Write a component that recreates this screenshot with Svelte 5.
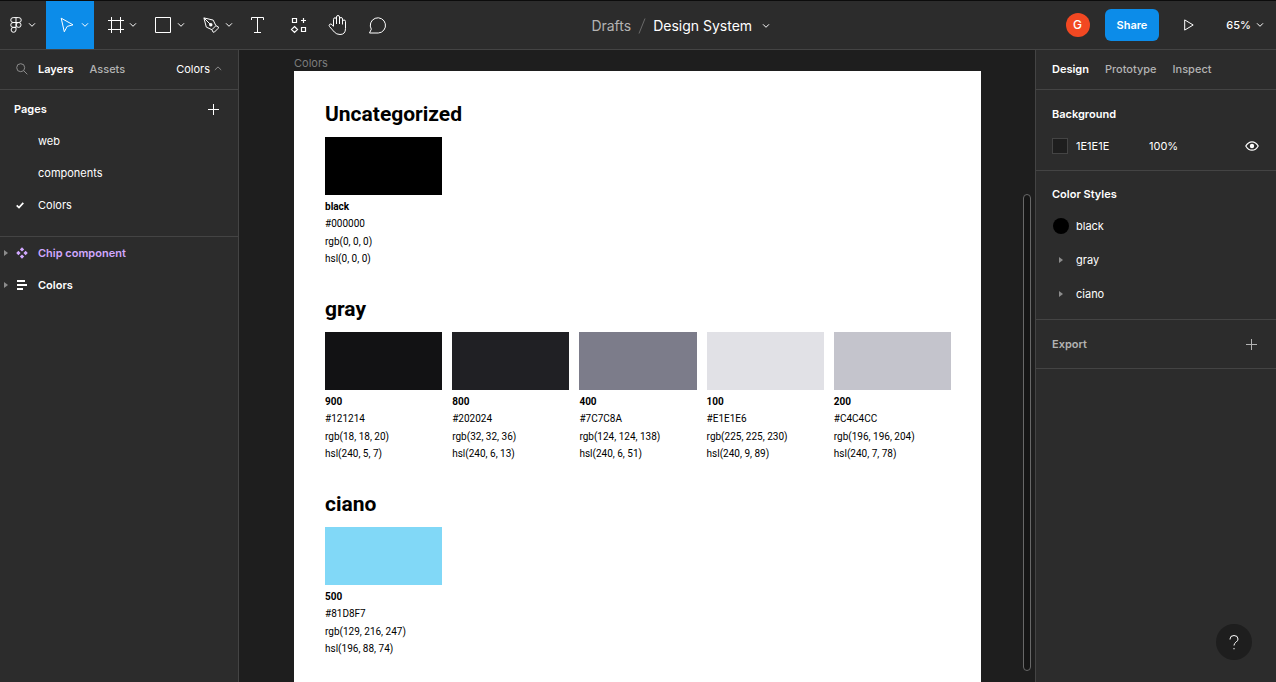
<script>
  const pages = ['web', 'components', 'Colors'];
  let currentPage = $state('Colors');

  const groups = [
    { title: 'Uncategorized', colors: [{ name: 'black', hex: '#000000', rgb: '0, 0, 0', hsl: '0, 0, 0' }] },
    {
      title: 'gray',
      colors: [
        { name: '900', hex: '#121214', rgb: '18, 18, 20', hsl: '240, 5, 7' },
        { name: '800', hex: '#202024', rgb: '32, 32, 36', hsl: '240, 6, 13' },
        { name: '400', hex: '#7C7C8A', rgb: '124, 124, 138', hsl: '240, 6, 51' },
        { name: '100', hex: '#E1E1E6', rgb: '225, 225, 230', hsl: '240, 9, 89' },
        { name: '200', hex: '#C4C4CC', rgb: '196, 196, 204', hsl: '240, 7, 78' }
      ]
    },
    { title: 'ciano', colors: [{ name: '500', hex: '#81D8F7', rgb: '129, 216, 247', hsl: '196, 88, 74' }] }
  ];
</script>

{#snippet chevron()}
  <svg width="8" height="6" viewBox="0 0 8 6"><path d="M1 1.3 4 4.3 7 1.3" /></svg>
{/snippet}

{#snippet caret()}
  <svg class="caret" width="4" height="6" viewBox="0 0 4 6"><path d="M0 0 4 3 0 6Z" /></svg>
{/snippet}

{#snippet plus()}
  <svg width="11" height="11" viewBox="0 0 11 11"><path d="M5.5 0V11M0 5.5H11" /></svg>
{/snippet}

<div class="app">
  <header>
    <nav class="tools" aria-label="Tools">
      <button class="tool menu" aria-label="Main menu">
        <svg width="12" height="16" viewBox="0 0 12 16">
          <path d="M6 .6H3.2a2.45 2.45 0 0 0 0 4.9H6ZM6 .6h2.8a2.45 2.45 0 0 1 0 4.9H6M6 5.5H3.2a2.45 2.45 0 0 0 0 4.9H6ZM6 10.4H3.2A2.45 2.45 0 1 0 6 12.9Z" />
          <circle cx="8.6" cy="7.95" r="2.45" />
        </svg>
        {@render chevron()}
      </button>
      <button class="tool active" aria-label="Move">
        <svg width="16" height="16" viewBox="0 0 16 16"><path d="M2.2 1.2 14 7.8 8.2 9.4 5.3 14.8Z" /></svg>
        {@render chevron()}
      </button>
      <button class="tool" aria-label="Frame">
        <svg width="16" height="16" viewBox="0 0 16 16"><path d="M4.5 0V16M13.5 0V16M1 3.5H17M1 12.5H17" /></svg>
        {@render chevron()}
      </button>
      <button class="tool" aria-label="Shape">
        <svg width="16" height="16" viewBox="0 0 16 16"><path d="M.5.5H15.5V15.5H.5Z" /></svg>
        {@render chevron()}
      </button>
      <button class="tool" aria-label="Pen">
        <svg width="16" height="16" viewBox="0 0 16 16">
          <path d="M.9.9 3.3 10.1 8.9 12.7 12.9 8.7 10.2 3.1ZM.9.9 6.9 6.9M8.9 12.7l1.2 2.5 1.3-.1 3.9-3.9.1-1.3-2.5-1.2" />
          <circle class="pupil" cx="7.8" cy="7.8" r="1.7" />
        </svg>
        {@render chevron()}
      </button>
      <button class="tool single" aria-label="Text">
        <svg width="14" height="16" viewBox="0 0 14 16"><path d="M.5 3V.5H12.5V3M6.5 .5V15.5M3 15.5H10" /></svg>
      </button>
      <button class="tool single" aria-label="Resources">
        <svg width="16" height="16" viewBox="0 0 16 16">
          <path stroke-width="1.2" d="M2.5 1.5h4v4h-4ZM11.5 10.5h4v4h-4ZM13.5 1v5M11 3.5h5M4.500 9.5 7.5 12.5 4.5 15.5 1.5 12.5Z" />
        </svg>
      </button>
      <button class="tool single" aria-label="Hand">
        <svg width="20" height="20" viewBox="0 0 20 20">
          <path d="M5.5 11V4.3a1.5 1.5 0 0 1 3 0V9M8.5 5V2a1.5 1.5 0 0 1 3 0V9M11.5 4a1.5 1.5 0 0 1 3 0V9.5M14.5 6.5a1.5 1.5 0 0 1 3 0V13.5Q17.5 19.5 12 19.5 8.5 19.5 6.3 17L1.5 11.5Q.6 10.2 1.7 9.3 2.9 8.6 4 9.6L5.5 11.5" />
        </svg>
      </button>
      <button class="tool single" aria-label="Comment">
        <svg width="20" height="17" viewBox="0 0 20 17"><path d="M1.5 16 3.3 12.2A7.6 7.6 0 1 1 10.3 16Z" /></svg>
      </button>
    </nav>

    <div class="file">
      <a href="#drafts">Drafts</a>
      <svg class="slash" width="8" height="16" viewBox="0 0 8 16"><path d="M7 .5 1 15.5" /></svg>
      <button>Design System {@render chevron()}</button>
    </div>

    <div class="actions">
      <span class="avatar">G</span>
      <button class="share">Share</button>
      <button class="play" aria-label="Present">
        <svg width="10" height="12" viewBox="0 0 10 12"><path d="M.7.9 9.2 6 .7 11.1Z" /></svg>
      </button>
      <button class="zoom">65% {@render chevron()}</button>
    </div>
  </header>

  <div class="body">
    <aside class="left">
      <div class="bar">
        <button class="icon search" aria-label="Search">
          <svg width="12" height="12" viewBox="0 0 12 12"><circle cx="4.7" cy="4.7" r="4" /><path d="M7.6 7.6 11.3 11.3" /></svg>
        </button>
        <button class="tab on">Layers</button>
        <button class="tab">Assets</button>
        <button class="pagepick">
          Colors
          <svg width="8" height="5" viewBox="0 0 8 5"><path d="M.8 4 4 .9 7.2 4" /></svg>
        </button>
      </div>

      <section class="pages">
        <div class="head">
          <h2>Pages</h2>
          <button class="icon" aria-label="Add page">{@render plus()}</button>
        </div>
        {#each pages as page}
          <button class="page" onclick={() => (currentPage = page)}>
            <span class="mark">
              {#if page === currentPage}
                <svg width="8" height="7" viewBox="0 0 8 7"><path stroke-width="1.7" d="M.7 3.4 3 5.6 7.3.9" /></svg>
              {/if}
            </span>
            {page}
          </button>
        {/each}
      </section>

      <section>
        <button class="layer component">
          {@render caret()}
          <svg class="solid" width="12" height="12" viewBox="0 0 12 12">
            <path d="M6 .2 8.2 2.4 6 4.6 3.8 2.4ZM6 7.4 8.2 9.6 6 11.8 3.8 9.6ZM2.4 3.8 4.6 6 2.4 8.2.2 6ZM9.6 3.8 11.8 6 9.6 8.2 7.4 6Z" />
          </svg>
          Chip component
        </button>
        <button class="layer">
          {@render caret()}
          <svg class="solid" width="12" height="12" viewBox="0 0 12 12"><path d="M1 1h8v2H1ZM1 5h10v2H1ZM1 9h6v2H1Z" /></svg>
          Colors
        </button>
      </section>
    </aside>

    <main>
      <span class="label">Colors</span>
      <article>
        {#each groups as group}
          <section>
            <h2>{group.title}</h2>
            <div class="cards">
              {#each group.colors as c}
                <div class="card">
                  <div class="swatch" style:background={c.hex}></div>
                  <div class="values">
                    <strong>{c.name}</strong>
                    <span>{c.hex}</span>
                    <span>rgb({c.rgb})</span>
                    <span>hsl({c.hsl})</span>
                  </div>
                </div>
              {/each}
            </div>
          </section>
        {/each}
      </article>
      <div class="scroll"></div>
    </main>

    <aside class="right">
      <div class="bar">
        <button class="tab on">Design</button>
        <button class="tab">Prototype</button>
        <button class="tab">Inspect</button>
      </div>

      <section class="background">
        <h2>Background</h2>
        <div class="fill">
          <span class="chip"></span>
          <input class="hex" aria-label="Background color" value="1E1E1E" />
          <input class="alpha" aria-label="Background opacity" value="100%" />
          <button class="icon" aria-label="Toggle visibility">
            <svg width="14" height="10" viewBox="0 0 14 10">
              <path stroke-width="1.2" d="M.8 5Q3.2.8 7 .8T13.2 5Q10.8 9.2 7 9.2T.8 5Z" />
              <circle class="pupil" cx="7" cy="5" r="2.2" />
            </svg>
          </button>
        </div>
      </section>

      <section class="styles">
        <h2>Color Styles</h2>
        <button class="style"><span class="mark"><span class="dot"></span></span>black</button>
        <button class="style"><span class="mark">{@render caret()}</span>gray</button>
        <button class="style"><span class="mark">{@render caret()}</span>ciano</button>
      </section>

      <section class="export">
        <h2>Export</h2>
        <button class="icon" aria-label="Add export">{@render plus()}</button>
      </section>
    </aside>
  </div>

  <button class="help" aria-label="Help">
    <svg width="10" height="15" viewBox="0 0 10 15"><path d="M1 4.5V4a4 3.5 0 0 1 8 0Q9 5.8 7 7.2 5 8.5 5 10.5M5 13V14.3" /></svg>
  </button>
</div>

<style>
  :global(body) {
    margin: 0;
    background: #1e1e1e;
  }

  .app {
    position: relative;
    display: flex;
    flex-direction: column;
    min-height: 100vh;
    font: 400 11px/16px Inter, sans-serif;
    color: #fff;
  }

  .app :where(*) {
    box-sizing: border-box;
  }

  button,
  input {
    margin: 0;
    padding: 0;
    border: 0;
    background: none;
    color: inherit;
    font: inherit;
    text-align: left;
  }

  h2 {
    margin: 0;
    font-size: 11px;
    font-weight: 600;
  }

  svg {
    display: block;
    flex: none;
    overflow: visible;
    fill: none;
    stroke: currentColor;
  }

  .caret,
  .solid,
  .pupil {
    fill: currentColor;
    stroke: none;
  }

  .caret {
    color: #8c8c8c;
  }

  header {
    display: flex;
    height: 50px;
    background: #2c2c2c;
    border-top: 1px solid #0c0c0c;
    border-bottom: 1px solid #444;
  }

  .tools {
    display: flex;
  }

  .tool {
    display: flex;
    align-items: center;
    justify-content: flex-end;
    gap: 6px;
    width: 48px;
    padding-right: 5px;
  }

  .tool.menu {
    width: 46px;
    padding-right: 10px;
  }

  .tool.active {
    background: #0c8ce9;
  }

  .tool.single {
    justify-content: center;
    width: 40px;
    padding: 0;
  }

  .file {
    flex: 1;
    display: flex;
    align-items: center;
    justify-content: center;
    gap: 7px;
    padding: 2px 102px 0 0;
    font-size: 14px;
    white-space: nowrap;
  }

  .file a {
    color: #b3b3b3;
    text-decoration: none;
  }

  .file button {
    display: flex;
    align-items: center;
    gap: 10px;
  }

  .slash {
    color: #6a6a6a;
  }

  .actions {
    display: flex;
    align-items: center;
    padding-right: 12px;
  }

  .avatar {
    width: 24px;
    height: 24px;
    margin-right: 15px;
    border-radius: 50%;
    background: #f24822;
    font-size: 12px;
    font-weight: 500;
    line-height: 24px;
    text-align: center;
  }

  .share {
    height: 32px;
    padding: 0 12px;
    border-radius: 6px;
    background: #0c8ce9;
    font-weight: 600;
  }

  .play {
    margin: 0 32px 0 25px;
  }

  .zoom {
    display: flex;
    align-items: center;
    gap: 5px;
    font-weight: 500;
  }

  .body {
    flex: 1;
    display: grid;
    grid-template-columns: 239px 1fr 241px;
  }

  aside {
    background: #2c2c2c;
  }

  .left {
    border-right: 1px solid #444;
  }

  .right {
    border-left: 1px solid #444;
  }

  .bar {
    display: flex;
    align-items: center;
    gap: 16px;
    height: 40px;
    padding: 0 16px 2px;
    border-bottom: 1px solid #444;
  }

  .search {
    margin-right: -6px;
    color: #8c8c8c;
  }

  .tab {
    color: #b3b3b3;
    font-weight: 500;
  }

  .tab.on {
    color: #fff;
    font-weight: 600;
  }

  .pagepick {
    display: flex;
    align-items: center;
    gap: 4px;
    margin-left: auto;
  }

  .pagepick svg {
    color: #8c8c8c;
  }

  .pages {
    padding: 3px 0 15px;
    border-bottom: 1px solid #444;
  }

  .head {
    display: flex;
    align-items: center;
    justify-content: space-between;
    height: 32px;
    padding: 0 19px 0 14px;
  }

  .page {
    display: flex;
    align-items: center;
    width: 100%;
    height: 32px;
    padding-left: 16px;
  }

  .mark {
    display: flex;
    width: 22px;
  }

  .layer {
    display: flex;
    align-items: center;
    width: 100%;
    height: 32px;
    padding-left: 4px;
    font-weight: 600;
  }

  .layer .solid {
    margin: 0 10px 0 8px;
  }

  .component {
    color: #d1a8ff;
  }

  main {
    position: relative;
    display: flex;
    flex-direction: column;
    padding: 5px 54px 0 55px;
    background: #1e1e1e;
  }

  .label {
    color: #7c7c7c;
  }

  article {
    flex: 1;
    padding: 30px 30px 20px 31px;
    background: #fff;
    color: #000;
    font-family: Roboto, sans-serif;
  }

  article section + section {
    margin-top: 28px;
  }

  article h2 {
    margin-bottom: 10px;
    font-size: 21px;
    font-weight: 700;
    line-height: 26px;
  }

  .cards {
    display: grid;
    grid-template-columns: repeat(5, 1fr);
    gap: 10px;
  }

  .swatch {
    height: 58px;
    margin-bottom: 3px;
  }

  .values {
    display: grid;
    grid-template-rows: repeat(4, 1fr);
    align-items: center;
    height: 70px;
    font-size: 10px;
  }

  .values strong {
    font-weight: 700;
  }

  .scroll {
    position: absolute;
    top: 144px;
    right: 4px;
    bottom: 11px;
    width: 8px;
    border: 1px solid #686868;
    border-radius: 4px;
    background: #161616;
  }

  .right section {
    padding: 8px 16px;
    border-bottom: 1px solid #444;
  }

  .background h2 {
    line-height: 32px;
  }

  .fill {
    display: flex;
    align-items: center;
    height: 32px;
  }

  .chip {
    width: 16px;
    height: 16px;
    margin-right: 8px;
    border: 1px solid #444;
    background: #1e1e1e;
  }

  .hex {
    width: 73px;
  }

  .alpha {
    width: 48px;
  }

  .fill .icon {
    margin-left: auto;
    margin-right: 1px;
  }

  .styles h2 {
    line-height: 30px;
  }

  .style {
    display: flex;
    align-items: center;
    width: 100%;
    height: 34px;
  }

  .style .mark {
    justify-content: center;
    width: 18px;
    margin-right: 6px;
  }

  .dot {
    width: 16px;
    height: 16px;
    border-radius: 50%;
    background: #000;
  }

  .export {
    display: flex;
    align-items: center;
    justify-content: space-between;
    color: #b3b3b3;
  }

  .export h2 {
    line-height: 32px;
  }

  .export .icon {
    margin-right: 3px;
  }

  .help {
    position: absolute;
    right: 24px;
    bottom: 22px;
    display: grid;
    place-items: center;
    width: 36px;
    height: 36px;
    border-radius: 50%;
    background: #1e1e1e;
  }
</style>
